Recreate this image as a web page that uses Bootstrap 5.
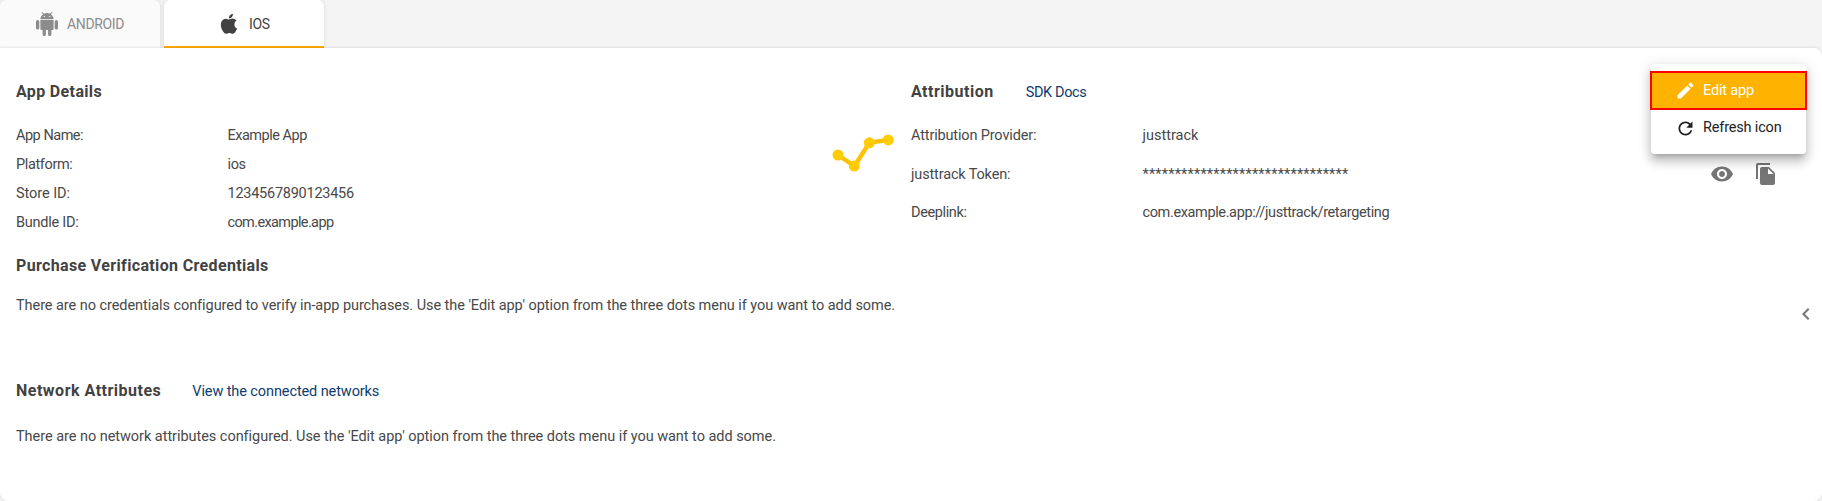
<!DOCTYPE html>
<html lang="en">
<head>
<meta charset="utf-8">
<meta name="viewport" content="width=device-width, initial-scale=1">
<title>App Details</title>
<link href="https://cdn.jsdelivr.net/npm/bootstrap@5.3.0/dist/css/bootstrap.min.css" rel="stylesheet">
<style>
  html, body { height: 100%; overflow: hidden; }
  body { background: #f4f4f4; color: #484848; font: 400 14.5px/25px Roboto, sans-serif; }
  svg { display: block; flex: none; }
  .app-tabs { gap: 4px; height: 48px; }
  .app-tab { width: 160px; height: 48px; font-size: 14px; border-radius: 6px 6px 0 0; background: #fafafa; color: #8c8c8c; box-shadow: 0 0 4px rgba(0,0,0,.12); }
  .app-tab svg { margin-left: 35px; margin-right: 8px; }
  .app-tab.active { background: #fff; color: #424242; border-bottom: 2px solid #ffab00; }
  .app-tab.active svg { margin-left: 53px; margin-right: 8px; }
  .app-tab.active span { padding-top: 2px; }
  .panel { height: 453px; background: #fff; border-radius: 0 8px 8px 8px; box-shadow: 0 0 3px rgba(0,0,0,.15); padding: 31px 16px 0; }
  .block-title { font-size: 16px; line-height: 25px; font-weight: 700; margin: 0; letter-spacing: .35px; color: #424242; }
  .block-title.wide { letter-spacing: .5px; }
  .title-row { gap: 32px; height: 25px; margin-bottom: 16.5px; }
  .doc-link { color: #0d3c6e; text-decoration: none; line-height: 25px; padding-top: 1px; }
  .details { width: 816px; }
  .details dt { width: 211.500px; font-weight: 400; }
  .details dl > div { height: 29px; line-height: 29px; }
  .logo { width: 79px; padding-top: 55px; }
  .attribution dt { width: 231.500px; font-weight: 400; }
  .attribution dl > div { height: 38.5px; line-height: 29px; }
  .attribution dl > .token-row { line-height: 31px; }
  .token-actions { gap: 20px; margin-right: 28px; margin-top: 3px; color: #757575; }
  .t1 { letter-spacing: -.06px; } .t2 { letter-spacing: -.15px; }
  .t3 { letter-spacing: -.25px; } .t4 { letter-spacing: -.37px; }
  .t5 { letter-spacing: -.49px; } .t6 { letter-spacing: -.62px; }
  .stars { letter-spacing: .19px; }
  .credentials { margin-top: 16.5px; }
  .credentials p { margin: 14.5px 0 0; }
  .network { margin-top: 60.5px; }
  .network .title-row { margin-bottom: 20.5px; gap: 31px; }
  .network .doc-link { letter-spacing: -.1px; }
  .network p { letter-spacing: -.04px; }
  .app-menu { top: 64px; left: 1651px; width: 155px; height: 90px; padding: 7px 0; background: #fff; border-radius: 4px; box-shadow: 0 5px 5px -3px rgba(0,0,0,.2), 0 8px 10px 1px rgba(0,0,0,.14), 0 3px 14px 2px rgba(0,0,0,.12); }
  .app-menu a { height: 36px; padding-left: 24px; gap: 7px; color: #212121; text-decoration: none; letter-spacing: -.17px; }
  .app-menu a.chosen { height: 39px; width: 157px; margin-left: -1px; padding-left: 23px; background: #ffb300; border: 2px solid #f00; color: #fff; }
  .app-menu a span { padding-bottom: 2px; }
  .app-menu a.chosen span { padding-bottom: 0; }
  .collapse-arrow { top: 302px; left: 1794px; color: #757575; }
</style>
</head>
<body class="position-relative">
<nav class="app-tabs d-flex">
  <div class="app-tab d-flex align-items-center">
    <svg width="24" height="24" viewBox="0 0 24 24" fill="currentColor"><path transform="translate(-1.2 0) scale(1.1 1)" d="M15,5H14V4H15M10,5H9V4H10M15.53,2.16L16.84,0.85C17.03,0.66 17.03,0.34 16.84,0.14C16.64,-0.05 16.32,-0.05 16.13,0.14L14.65,1.62C13.85,1.23 12.95,1 12,1C11.04,1 10.14,1.23 9.34,1.63L7.85,0.14C7.66,-0.05 7.34,-0.05 7.15,0.14C6.95,0.34 6.95,0.66 7.15,0.85L8.46,2.16C6.97,3.26 6,5 6,7H18C18,5 17,3.25 15.53,2.16M20.5,8A1.5,1.5 0 0,0 19,9.5V16A1.5,1.5 0 0,0 22,16V9.5A1.5,1.5 0 0,0 20.5,8M3.5,8A1.5,1.5 0 0,0 2,9.5V16A1.5,1.5 0 0,0 5,16V9.5A1.5,1.5 0 0,0 3.5,8M6,17A1,1 0 0,0 7,18H8V22.5A1.5,1.5 0 0,0 11,22.5V18H13V22.5A1.5,1.5 0 0,0 16,22.5V18H17A1,1 0 0,0 18,17V7.8H6Z"/></svg>
    <span class="t4">ANDROID</span>
  </div>
  <div class="app-tab active d-flex align-items-center">
    <svg width="24" height="24" viewBox="0 0 24 24" fill="currentColor"><path transform="translate(0 .8)" d="M18.71,19.5C17.88,20.74 17,21.95 15.66,21.97C14.32,22 13.89,21.18 12.37,21.18C10.84,21.18 10.37,21.95 9.1,22C7.79,22.05 6.8,20.68 5.96,19.47C4.25,17 2.94,12.45 4.7,9.39C5.57,7.87 7.13,6.91 8.82,6.88C10.1,6.86 11.32,7.75 12.11,7.75C12.89,7.75 14.37,6.68 15.92,6.84C16.57,6.87 18.39,7.1 19.56,8.82C19.47,8.88 17.39,10.1 17.41,12.63C17.44,15.65 20.06,16.66 20.09,16.67C20.06,16.74 19.67,18.11 18.71,19.5M13,3.5C13.73,2.67 14.94,2.04 15.94,2C16.07,3.17 15.6,4.35 14.9,5.19C14.21,6.04 13.07,6.7 11.95,6.61C11.8,5.46 12.36,4.26 13,3.5Z"/></svg>
    <span class="t4">IOS</span>
  </div>
</nav>

<main class="panel position-relative">
  <div class="d-flex">
    <section class="details">
      <div class="title-row d-flex"><h2 class="block-title">App Details</h2></div>
      <dl class="m-0">
        <div class="d-flex"><dt class="t5">App Name:</dt><dd class="m-0 t5">Example App</dd></div>
        <div class="d-flex"><dt class="t4">Platform:</dt><dd class="m-0 t4">ios</dd></div>
        <div class="d-flex"><dt class="t1">Store ID:</dt><dd class="m-0 t3">1234567890123456</dd></div>
        <div class="d-flex"><dt class="t3">Bundle ID:</dt><dd class="m-0 t6">com.example.app</dd></div>
      </dl>
    </section>
    <div class="logo">
      <svg width="64" height="42" viewBox="832 134 64 42" fill="#ffcc02"><path d="M838 155 854.5 166 869.500 142.500 888 140" fill="none" stroke="#ffc107" stroke-width="4.500"/><circle cx="838" cy="155" r="5.500"/><circle cx="854.300" cy="166" r="5.500"/><circle cx="869.300" cy="142.800" r="5.500"/><circle cx="888.200" cy="139.900" r="5.500"/></svg>
    </div>
    <section class="attribution flex-grow-1">
      <div class="title-row d-flex"><h2 class="block-title wide">Attribution</h2><a class="doc-link t4" href="#">SDK Docs</a></div>
      <dl class="m-0">
        <div class="d-flex"><dt class="t2">Attribution Provider:</dt><dd class="m-0">justtrack</dd></div>
        <div class="token-row d-flex"><dt class="t2">justtrack Token:</dt><dd class="m-0 stars">********************************</dd>
          <div class="token-actions d-flex ms-auto">
            <svg width="24" height="24" viewBox="0 0 24 24" fill="currentColor"><path d="M12 4.500C7 4.500 2.730 7.610 1 12c1.730 4.390 6 7.500 11 7.500s9.270-3.110 11-7.500c-1.730-4.390-6-7.500-11-7.500zM12 17c-2.760 0-5-2.240-5-5s2.240-5 5-5 5 2.240 5 5-2.240 5-5 5zm0-8c-1.660 0-3 1.340-3 3s1.340 3 3 3 3-1.340 3-3-1.340-3-3-3z"/></svg>
            <svg width="24" height="24" viewBox="0 0 24 24" fill="currentColor"><path d="M16 1H4c-1.100 0-2 .9-2 2v14h2V3h12V1zm-1 4 6 6v10c0 1.100-.9 2-2 2H7.990C6.890 23 6 22.100 6 21l.01-14c0-1.100.89-2 1.990-2h7zm-1 7h5.500L14 6.500V12z"/></svg>
          </div></div>
        <div class="d-flex"><dt class="t4">Deeplink:</dt><dd class="m-0 t4">com.example.app://justtrack/retargeting</dd></div>
      </dl>
    </section>
  </div>

  <section class="credentials">
    <h2 class="block-title">Purchase Verification Credentials</h2>
    <p class="t1">There are no credentials configured to verify in-app purchases. Use the 'Edit app' option from the three dots menu if you want to add some.</p>
  </section>

  <section class="network">
    <div class="title-row d-flex"><h2 class="block-title wide">Network Attributes</h2><a class="doc-link" href="#">View the connected networks</a></div>
    <p class="m-0">There are no network attributes configured. Use the 'Edit app' option from the three dots menu if you want to add some.</p>
  </section>
</main>

<div class="app-menu position-absolute">
  <a class="chosen d-flex align-items-center" href="#">
    <svg width="21" height="21" viewBox="0 0 24 24" fill="currentColor"><path d="M3 17.250V21h3.750L17.810 9.940l-3.750-3.750L3 17.250zM20.710 7.040c.39-.39.39-1.020 0-1.410l-2.340-2.340c-.39-.39-1.020-.39-1.410 0l-1.830 1.830 3.750 3.750 1.830-1.830z"/></svg>
    <span>Edit app</span>
  </a>
  <a class="d-flex align-items-center" href="#">
    <svg width="21" height="21" viewBox="0 0 24 24" fill="currentColor"><path d="M17.650 6.350C16.200 4.900 14.210 4 12 4c-4.420 0-7.990 3.580-7.990 8s3.570 8 7.990 8c3.730 0 6.840-2.550 7.730-6h-2.080c-.82 2.330-3.040 4-5.650 4-3.310 0-6-2.690-6-6s2.690-6 6-6c1.660 0 3.140.69 4.220 1.780L13 11h7V4l-2.350 2.350z"/></svg>
    <span>Refresh icon</span>
  </a>
</div>
<svg class="collapse-arrow position-absolute" width="24" height="24" viewBox="0 0 24 24" fill="currentColor"><path d="M15.410 7.410 14 6l-6 6 6 6 1.410-1.410L10.830 12z"/></svg>
<script src="https://cdn.jsdelivr.net/npm/bootstrap@5.3.0/dist/js/bootstrap.bundle.min.js"></script>
</body>
</html>
